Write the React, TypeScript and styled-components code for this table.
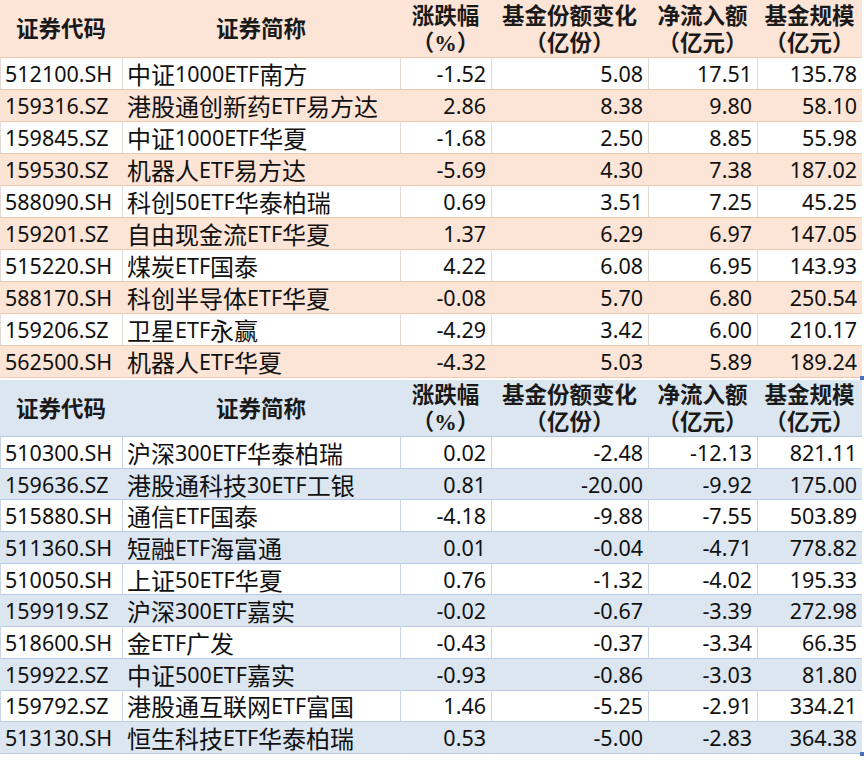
import React from "react";
import styled, { createGlobalStyle } from "styled-components";

const Global = createGlobalStyle`
  html, body { margin: 0; padding: 0; background: #ffffff; }
  body { font-family: "Noto Sans", "Noto Sans CJK SC", sans-serif; }
`;

type Theme = "orange" | "blue";

const palette = {
  orange: { fill: "#FCE4D6", head: "#FCE4D6", hline: "#F2C9AF", vline: "#E4DAD3" },
  blue: { fill: "#DCE6F1", head: "#DCE6F1", hline: "#B7CBE3", vline: "#C8D5E5" },
};

const Page = styled.div`
  width: 866px;
  height: 760px;
  display: flex;
  flex-direction: column;
  gap: 2px;
  overflow: hidden;
`;

const Table = styled.div<{ $rowH: number; $headH: number }>`
  position: relative;
  width: 862px;
  display: grid;
  grid-template-columns: 122px 278px 91px 157px 109px 105px;
  grid-template-rows: ${(p) => p.$headH}px;
  grid-auto-rows: ${(p) => p.$rowH}px;
`;

const HeadCell = styled.div<{ $t: Theme }>`
  background: ${(p) => palette[p.$t].head};
  border-bottom: 1px solid ${(p) => palette[p.$t].hline};
  box-sizing: border-box;
  display: flex;
  flex-direction: column;
  align-items: center;
  justify-content: center;
  font-family: "Liberation Serif", "Noto Sans CJK SC", serif;
  font-weight: 700;
  font-size: 22.5px;
  line-height: 27px;
  color: #1a1a1a;
  white-space: nowrap;
  padding-top: 2px;
`;

const Cell = styled.div<{ $t: Theme; $shade: boolean; $align: "left" | "right" }>`
  background: ${(p) => (p.$shade ? palette[p.$t].fill : "#ffffff")};
  border-bottom: 1px solid ${(p) => palette[p.$t].hline};
  border-left: 1px solid ${(p) => (p.$shade ? "transparent" : palette[p.$t].vline)};
  box-sizing: border-box;
  display: flex;
  align-items: center;
  justify-content: ${(p) => (p.$align === "left" ? "flex-start" : "flex-end")};
  padding: 1px 5px 0 4px;
  font-size: 21.5px;
  line-height: 28px;
  color: #111;
  white-space: nowrap;
  &:first-child { border-left: none; }
`;

const Han = styled.span`
  font-family: "Noto Sans CJK SC", sans-serif;
  font-size: 24px;
  line-height: 28px;
`;

const Handle = styled.span`
  position: absolute;
  right: -2px;
  bottom: -2px;
  width: 4px;
  height: 4px;
  background: #4a6fbf;
`;

type Row = [string, string, string, string, string, string];

const topRows: Row[] = [
  ["512100.SH", "中证1000ETF南方", "-1.52", "5.08", "17.51", "135.78"],
  ["159316.SZ", "港股通创新药ETF易方达", "2.86", "8.38", "9.80", "58.10"],
  ["159845.SZ", "中证1000ETF华夏", "-1.68", "2.50", "8.85", "55.98"],
  ["159530.SZ", "机器人ETF易方达", "-5.69", "4.30", "7.38", "187.02"],
  ["588090.SH", "科创50ETF华泰柏瑞", "0.69", "3.51", "7.25", "45.25"],
  ["159201.SZ", "自由现金流ETF华夏", "1.37", "6.29", "6.97", "147.05"],
  ["515220.SH", "煤炭ETF国泰", "4.22", "6.08", "6.95", "143.93"],
  ["588170.SH", "科创半导体ETF华夏", "-0.08", "5.70", "6.80", "250.54"],
  ["159206.SZ", "卫星ETF永赢", "-4.29", "3.42", "6.00", "210.17"],
  ["562500.SH", "机器人ETF华夏", "-4.32", "5.03", "5.89", "189.24"],
];

const bottomRows: Row[] = [
  ["510300.SH", "沪深300ETF华泰柏瑞", "0.02", "-2.48", "-12.13", "821.11"],
  ["159636.SZ", "港股通科技30ETF工银", "0.81", "-20.00", "-9.92", "175.00"],
  ["515880.SH", "通信ETF国泰", "-4.18", "-9.88", "-7.55", "503.89"],
  ["511360.SH", "短融ETF海富通", "0.01", "-0.04", "-4.71", "778.82"],
  ["510050.SH", "上证50ETF华夏", "0.76", "-1.32", "-4.02", "195.33"],
  ["159919.SZ", "沪深300ETF嘉实", "-0.02", "-0.67", "-3.39", "272.98"],
  ["518600.SH", "金ETF广发", "-0.43", "-0.37", "-3.34", "66.35"],
  ["159922.SZ", "中证500ETF嘉实", "-0.93", "-0.86", "-3.03", "81.80"],
  ["159792.SZ", "港股通互联网ETF富国", "1.46", "-5.25", "-2.91", "334.21"],
  ["513130.SH", "恒生科技ETF华泰柏瑞", "0.53", "-5.00", "-2.83", "364.38"],
];

const headers: string[][] = [
  ["证券代码"],
  ["证券简称"],
  ["涨跌幅", "（%）"],
  ["基金份额变化", "（亿份）"],
  ["净流入额", "（亿元）"],
  ["基金规模", "（亿元）"],
];

function Mixed({ text }: { text: string }) {
  const parts = text.match(/[\u4e00-\u9fff]+|[^\u4e00-\u9fff]+/g) || [];
  return (
    <>
      {parts.map((p, i) => (/[\u4e00-\u9fff]/.test(p) ? <Han key={i}>{p}</Han> : <span key={i}>{p}</span>))}
    </>
  );
}

function DataTable({ t, rows, headH, rowH }: { t: Theme; rows: Row[]; headH: number; rowH: number }) {
  return (
    <Table $rowH={rowH} $headH={headH}>
      {headers.map((h, i) => (
        <HeadCell key={"h" + i} $t={t}>
          {h.map((line, j) => (
            <span key={j}>{line}</span>
          ))}
        </HeadCell>
      ))}
      {rows.map((r, ri) =>
        r.map((v, ci) => (
          <Cell key={ri + "-" + ci} $t={t} $shade={ri % 2 === 1} $align={ci < 2 ? "left" : "right"}>
            {ci === 1 ? <Mixed text={v} /> : v}
          </Cell>
        ))
      )}
      <Handle />
    </Table>
  );
}

export default function App() {
  return (
    <>
      <Global />
      <Page>
        <DataTable t="orange" rows={topRows} headH={58} rowH={32} />
        <DataTable t="blue" rows={bottomRows} headH={57} rowH={31.7} />
      </Page>
    </>
  );
}
